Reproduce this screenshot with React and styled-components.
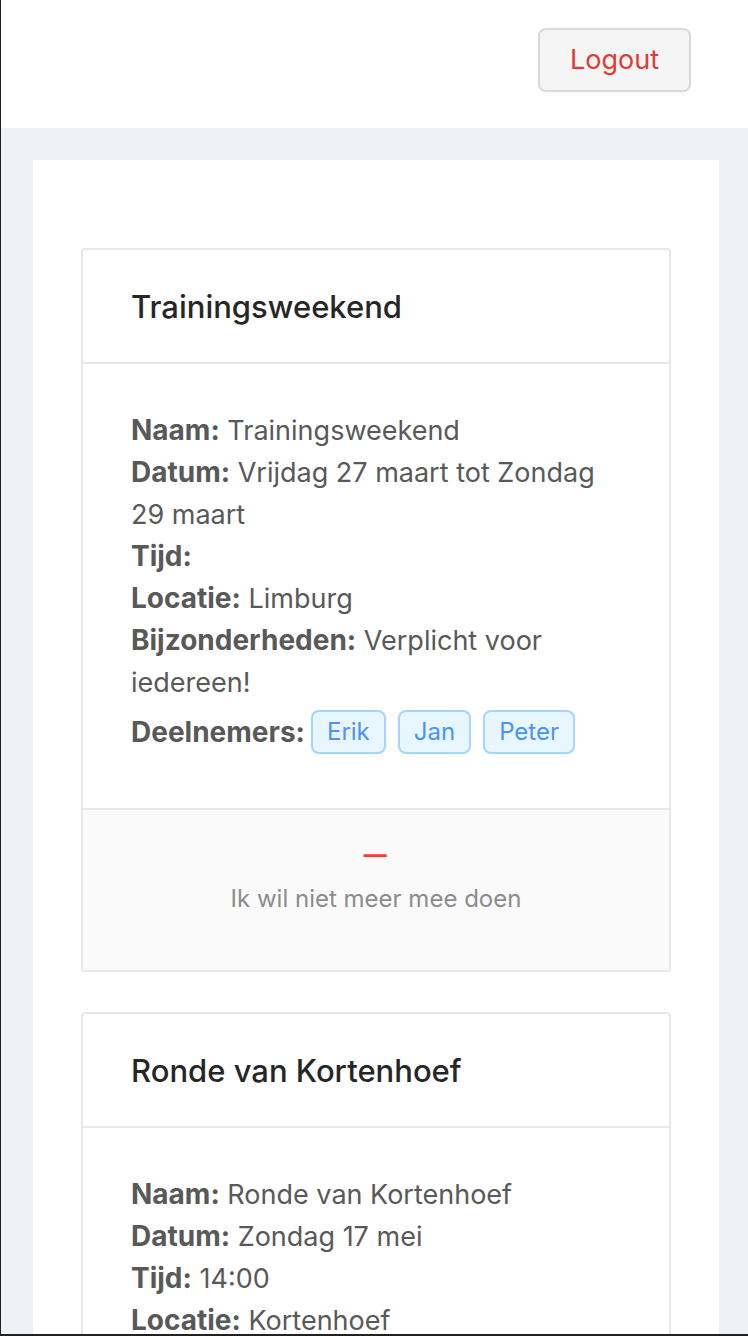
import React from "react";
import styled, { createGlobalStyle } from "styled-components";

const GlobalStyle = createGlobalStyle`
  * { box-sizing: border-box; }
  body {
    margin: 0;
    background: #f0f1f6;
    color: #595959;
    font-family: Inter, "Liberation Sans", sans-serif;
    font-size: 27px;
    line-height: 42px;
  }
`;

const Page = styled.div`
  display: flex;
  flex-direction: column;
  height: 100vh;
  overflow: hidden;
  border-left: 1px solid #222224;
  border-bottom: 2px solid #222224;
`;

const Header = styled.header`
  display: flex;
  flex: none;
  justify-content: flex-end;
  padding: 28px 57px 36px;
  background: #fff;
`;

const LogoutButton = styled.button`
  height: 64px;
  padding: 0 30px;
  border: 2px solid #d9d9d9;
  border-radius: 8px;
  background: #f5f5f5;
  box-shadow: 0 4px 0 rgba(0, 0, 0, 0.015);
  color: #e53935;
  font: inherit;
  cursor: pointer;
`;

const Content = styled.main`
  display: flex;
  flex: 1;
  flex-direction: column;
  min-height: 0;
  padding: 32px 29px 0 32px;
`;

const Panel = styled.div`
  display: flex;
  flex-direction: column;
  gap: 40px;
  padding: 88px 48px 48px;
  background: #fff;
`;

const Card = styled.article`
  border: 2px solid #e8e8e8;
  border-radius: 4px;
  background: #fff;
`;

const CardTitle = styled.h2`
  margin: 0;
  padding: 33px 48px 31px;
  border-bottom: 2px solid #e8e8e8;
  color: #262626;
  font-size: 31px;
  font-weight: 500;
  line-height: 48px;
`;

const CardBody = styled.div`
  padding: 46px 48px 48px;
`;

const Detail = styled.p`
  margin: 0;
`;

const Label = styled.strong`
  font-size: 28px;
  font-weight: 700;
  line-height: 1;
`;

const Participants = styled.div`
  display: flex;
  flex-wrap: wrap;
  align-items: center;
  gap: 12px;
  padding: 6px 0;
`;

const ParticipantsLabel = styled(Label)`
  margin-right: -6px;
`;

const Tag = styled.span`
  height: 44px;
  padding: 0 14px;
  border: 2px solid #a0d6ff;
  border-radius: 8px;
  background: #e8f7ff;
  color: #4a93ff;
  font-size: 24px;
  line-height: 40px;
`;

const CardFooter = styled.footer`
  padding: 24px 0 50px;
  border-top: 2px solid #e8e8e8;
  background: #fafafa;
`;

const ActionButton = styled.button`
  display: flex;
  flex-direction: column;
  align-items: center;
  width: 100%;
  padding: 0;
  border: 0;
  background: none;
  color: #8c8c8c;
  font: inherit;
  font-size: 24px;
  cursor: pointer;
`;

const MinusIcon = () => (
  <svg width="28" height="44" viewBox="0 0 28 44" aria-hidden="true">
    <rect x="1.5" y="20.2" width="23.2" height="2.7" rx="0.4" fill="#f03a34" />
  </svg>
);

const events = [
  {
    name: "Trainingsweekend",
    date: "Vrijdag 27 maart tot Zondag 29 maart",
    time: "",
    location: "Limburg",
    notes: "Verplicht voor iedereen!",
    participants: ["Erik", "Jan", "Peter"],
  },
  {
    name: "Ronde van Kortenhoef",
    date: "Zondag 17 mei",
    time: "14:00",
    location: "Kortenhoef",
  },
];

function EventCard({ event }) {
  return (
    <Card>
      <CardTitle>{event.name}</CardTitle>
      <CardBody>
        <Detail><Label>Naam:</Label> {event.name}</Detail>
        <Detail><Label>Datum:</Label> {event.date}</Detail>
        <Detail><Label>Tijd:</Label> {event.time}</Detail>
        <Detail><Label>Locatie:</Label> {event.location}</Detail>
        {event.notes && (
          <Detail><Label>Bijzonderheden:</Label> {event.notes}</Detail>
        )}
        {event.participants && (
          <Participants>
            <ParticipantsLabel>Deelnemers:</ParticipantsLabel>
            {event.participants.map((name) => <Tag key={name}>{name}</Tag>)}
          </Participants>
        )}
      </CardBody>
      {event.participants && (
        <CardFooter>
          <ActionButton type="button">
            <MinusIcon />
            <span>Ik wil niet meer mee doen</span>
          </ActionButton>
        </CardFooter>
      )}
    </Card>
  );
}

export default function App() {
  return (
    <>
      <GlobalStyle />
      <Page>
        <Header>
          <LogoutButton type="button">Logout</LogoutButton>
        </Header>
        <Content>
          <Panel>
            {events.map((event) => <EventCard key={event.name} event={event} />)}
          </Panel>
        </Content>
      </Page>
    </>
  );
}
